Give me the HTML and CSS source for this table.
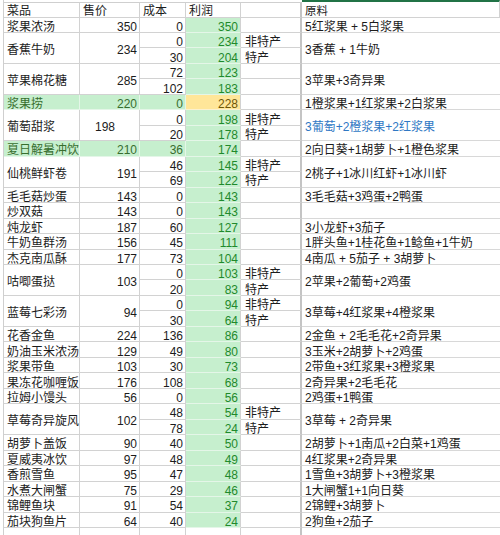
FILE: index.html
```html
<!DOCTYPE html>
<html lang="zh">
<head>
<meta charset="utf-8">
<title>菜品利润表</title>
<link rel="stylesheet" href="styles.css">
</head>
<body>
<div class="sheet">
  <div class="c h">菜品</div><div class="c h">售价</div><div class="c h">成本</div><div class="c h">利润</div><div class="c h tg"></div><div class="c hi">原料</div>

  <div class="c">浆果浓汤</div><div class="c n">350</div><div class="c n">0</div><div class="c n p">350</div><div class="c tg"></div><div class="c ing">5红浆果 + 5白浆果</div>

  <div class="c m">香蕉牛奶</div><div class="c n m">234</div><div class="c n">0</div><div class="c n p">234</div><div class="c tg">非特产</div><div class="c ing m">3香蕉 + 1牛奶</div>
  <div class="c n">30</div><div class="c n p">204</div><div class="c tg">特产</div>

  <div class="c m">苹果棉花糖</div><div class="c n m">285</div><div class="c n">72</div><div class="c n p">123</div><div class="c tg"></div><div class="c ing m">3苹果+3奇异果</div>
  <div class="c n">102</div><div class="c n p">183</div><div class="c tg"></div>

  <div class="c hl">浆果捞</div><div class="c n hl">220</div><div class="c n hl">0</div><div class="c n warn">228</div><div class="c tg"></div><div class="c ing">1橙浆果+1红浆果+2白浆果</div>

  <div class="c m">葡萄甜浆</div><div class="c m ctr">198</div><div class="c n">0</div><div class="c n p">198</div><div class="c tg">非特产</div><div class="c ing m blue">3葡萄+2橙浆果+2红浆果</div>
  <div class="c n">20</div><div class="c n p">178</div><div class="c tg">特产</div>

  <div class="c hl">夏日解暑冲饮</div><div class="c n hl">210</div><div class="c n hl">36</div><div class="c n p">174</div><div class="c tg"></div><div class="c ing">2向日葵+1胡萝卜+1橙色浆果</div>

  <div class="c m">仙桃鲜虾卷</div><div class="c n m">191</div><div class="c n">46</div><div class="c n p">145</div><div class="c tg">非特产</div><div class="c ing m">2桃子+1冰川红虾+1冰川虾</div>
  <div class="c n">69</div><div class="c n p">122</div><div class="c tg">特产</div>

  <div class="c">毛毛菇炒蛋</div><div class="c n">143</div><div class="c n">0</div><div class="c n p">143</div><div class="c tg"></div><div class="c ing">3毛毛菇+3鸡蛋+2鸭蛋</div>
  <div class="c">炒双菇</div><div class="c n">143</div><div class="c n">0</div><div class="c n p">143</div><div class="c tg"></div><div class="c ing"></div>
  <div class="c">炖龙虾</div><div class="c n">187</div><div class="c n">60</div><div class="c n p">127</div><div class="c tg"></div><div class="c ing">3小龙虾+3茄子</div>
  <div class="c">牛奶鱼群汤</div><div class="c n">156</div><div class="c n">45</div><div class="c n p">111</div><div class="c tg"></div><div class="c ing">1胖头鱼+1桂花鱼+1鲶鱼+1牛奶</div>
  <div class="c">杰克南瓜酥</div><div class="c n">177</div><div class="c n">73</div><div class="c n p">104</div><div class="c tg"></div><div class="c ing">4南瓜 + 5茄子 + 3胡萝卜</div>

  <div class="c m">咕唧蛋挞</div><div class="c n m">103</div><div class="c n">0</div><div class="c n p">103</div><div class="c tg">非特产</div><div class="c ing m">2苹果+2葡萄+2鸡蛋</div>
  <div class="c n">20</div><div class="c n p">83</div><div class="c tg">特产</div>

  <div class="c m">蓝莓七彩汤</div><div class="c n m">94</div><div class="c n">0</div><div class="c n p">94</div><div class="c tg">非特产</div><div class="c ing m">3草莓+4红浆果+4橙浆果</div>
  <div class="c n">30</div><div class="c n p">64</div><div class="c tg">特产</div>

  <div class="c">花香金鱼</div><div class="c n">224</div><div class="c n">136</div><div class="c n p">86</div><div class="c tg"></div><div class="c ing">2金鱼 + 2毛毛花+2奇异果</div>
  <div class="c">奶油玉米浓汤</div><div class="c n">129</div><div class="c n">49</div><div class="c n p">80</div><div class="c tg"></div><div class="c ing">3玉米+2胡萝卜+2鸡蛋</div>
  <div class="c">浆果带鱼</div><div class="c n">103</div><div class="c n">30</div><div class="c n p">73</div><div class="c tg"></div><div class="c ing">2带鱼+3红浆果+3橙浆果</div>
  <div class="c">果冻花咖喱饭</div><div class="c n">176</div><div class="c n">108</div><div class="c n p">68</div><div class="c tg"></div><div class="c ing">2奇异果+2毛毛花</div>
  <div class="c">拉姆小馒头</div><div class="c n">56</div><div class="c n">0</div><div class="c n p">56</div><div class="c tg"></div><div class="c ing">2鸡蛋+1鸭蛋</div>

  <div class="c m">草莓奇异旋风</div><div class="c n m">102</div><div class="c n">48</div><div class="c n p">54</div><div class="c tg">非特产</div><div class="c ing m">3草莓 + 2奇异果</div>
  <div class="c n">78</div><div class="c n p">24</div><div class="c tg">特产</div>

  <div class="c">胡萝卜盖饭</div><div class="c n">90</div><div class="c n">40</div><div class="c n p">50</div><div class="c tg"></div><div class="c ing">2胡萝卜+1南瓜+2白菜+1鸡蛋</div>
  <div class="c">夏威夷冰饮</div><div class="c n">97</div><div class="c n">48</div><div class="c n p">49</div><div class="c tg"></div><div class="c ing">4红浆果+2奇异果</div>
  <div class="c">香煎雪鱼</div><div class="c n">95</div><div class="c n">47</div><div class="c n p">48</div><div class="c tg"></div><div class="c ing">1雪鱼+3胡萝卜+3橙浆果</div>
  <div class="c">水煮大闸蟹</div><div class="c n">75</div><div class="c n">29</div><div class="c n p">46</div><div class="c tg"></div><div class="c ing">1大闸蟹1+1向日葵</div>
  <div class="c">锦鲤鱼块</div><div class="c n">91</div><div class="c n">54</div><div class="c n p">37</div><div class="c tg"></div><div class="c ing">2锦鲤+3胡萝卜</div>
  <div class="c">茄块狗鱼片</div><div class="c n">64</div><div class="c n">40</div><div class="c n p">24</div><div class="c tg"></div><div class="c ing">2狗鱼+2茄子</div>

  <div class="c e"></div><div class="c e"></div><div class="c e"></div><div class="c e"></div><div class="c e tg"></div><div class="c e ing"></div>
</div>
</body>
</html>
```
FILE: styles.css
```css
html, body {
  margin: 0;
  padding: 0;
  background: #ffffff;
}

body {
  width: 500px;
  height: 535px;
  overflow: hidden;
}

.sheet {
  margin-left: 3px;
  width: 497px;
  height: 535px;
  display: grid;
  grid-template-columns: 76px 60px 46px 55px 61px 1fr;
  grid-template-rows: 17.5px repeat(33, 15.47px) 15.47px 1fr;
  border-left: 1px solid #cfcfcf;
  box-sizing: border-box;
  font-family: "Liberation Sans", "Noto Sans CJK SC", sans-serif;
  font-size: 12px;
  color: #1c1c1c;
}

.c {
  box-sizing: border-box;
  border-right: 1px solid #d2d2d2;
  border-bottom: 1px solid #d2d2d2;
  display: flex;
  align-items: center;
  padding: 4px 2px 0 3px;
  line-height: 12px;
  white-space: nowrap;
  overflow: visible;
  min-width: 0;
}

.h {
  margin-top: 2px;
  border-top: 1px solid #cfcfcf;
  padding-top: 3px;
}

.hi {
  border-top: 2px solid #217346;
  padding-top: 4px;
  font-size: 11.5px;
}

.n {
  justify-content: flex-end;
}

.ctr {
  justify-content: center;
  padding-right: 12px;
}

.m {
  grid-row: span 2;
}

.p {
  background: #c6efce;
  color: #1f8a2c;
  border-bottom-color: #e4f6e8;
}

.hl {
  background: #c6efce;
  color: #386e2e;
  border-bottom-color: #e4f6e8;
  border-right-color: #e4f6e8;
}

.warn {
  background: #ffe699;
  color: #6e5708;
  border-bottom-color: #fbf1cf;
}

.tg {
  padding-left: 4px;
  border-right: 2px solid #c4c4c4;
}

.ing {
  padding-left: 3px;
  border-right: none;
  border-bottom-color: #d8d8d8;
}

.blue {
  color: #2f78c4;
}

.e {
  border-bottom: none;
}
```
